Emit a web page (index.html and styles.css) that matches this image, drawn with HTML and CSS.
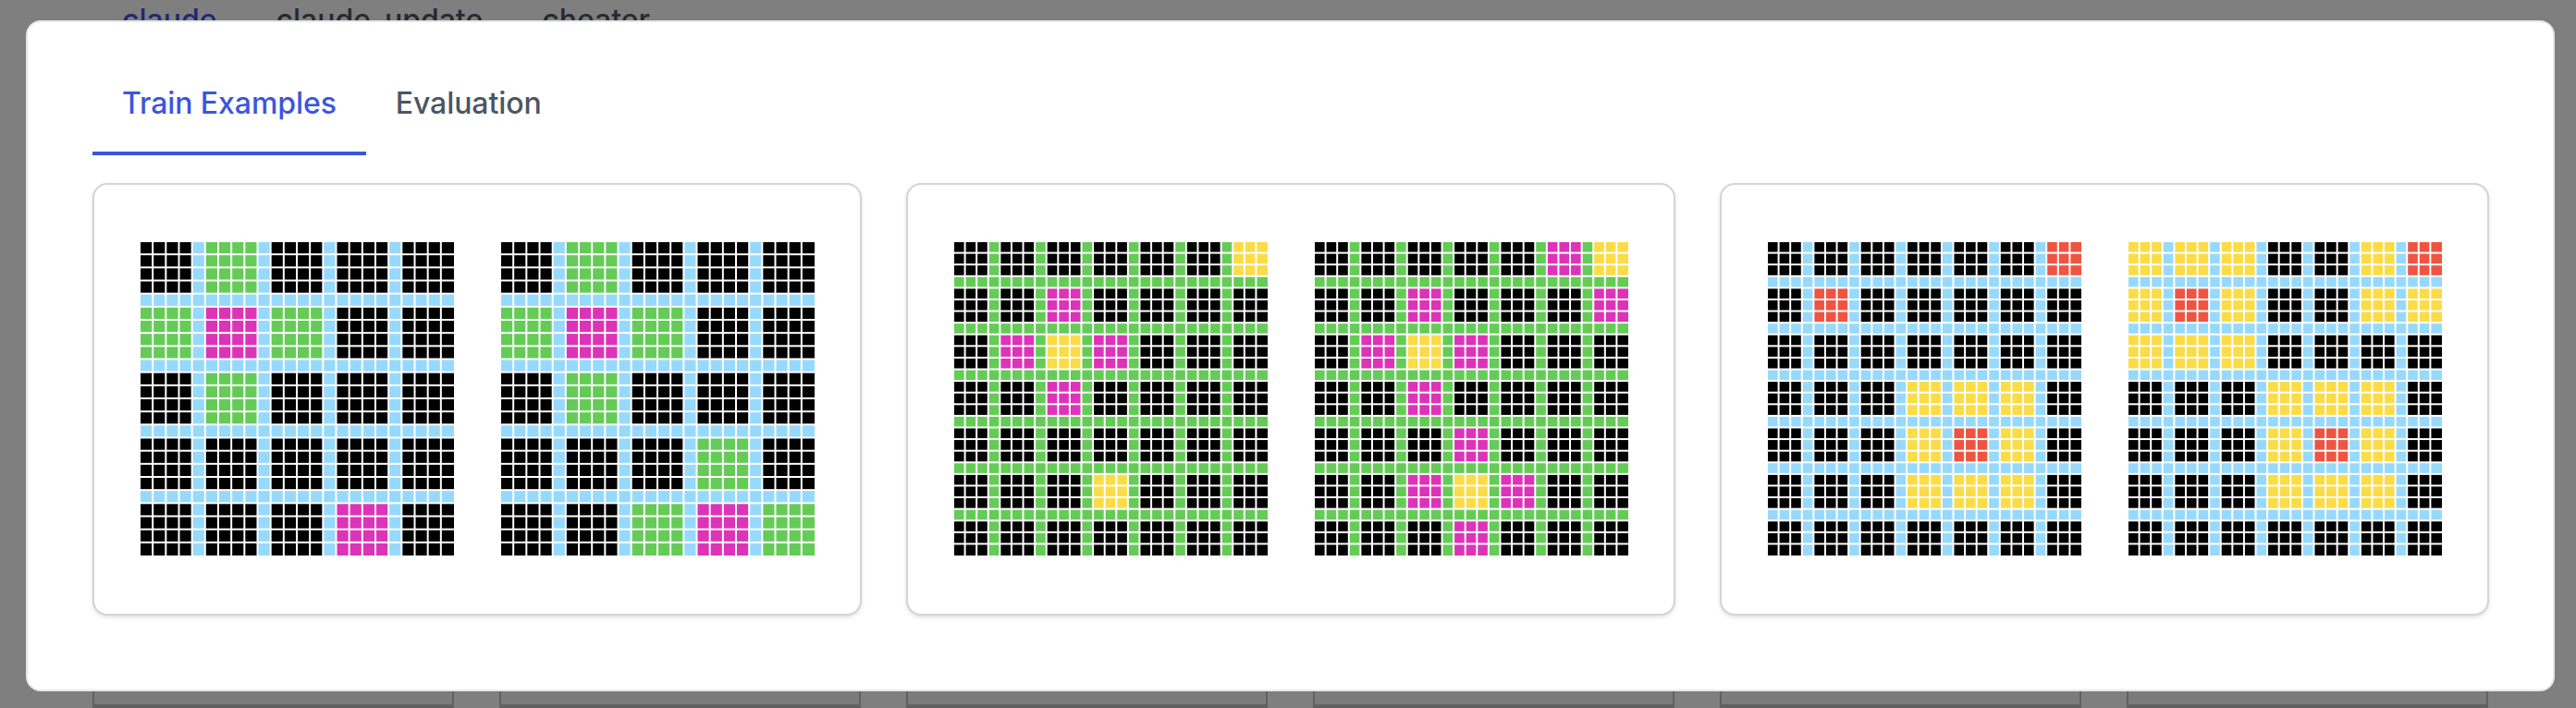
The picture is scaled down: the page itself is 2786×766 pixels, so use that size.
FILE: index.html
```html
<!DOCTYPE html>
<html lang="en">
<head>
<meta charset="utf-8">
<title>Train Examples</title>
<link rel="stylesheet" href="styles.css">
</head>
<body>
<div class="page">
  <nav class="tabs page-tabs">
    <span class="tab tab-active">claude</span>
    <span class="tab">claude_update</span>
    <span class="tab">cheater</span>
  </nav>
  <div class="results">
    <div class="result"></div><div class="result"></div><div class="result"></div>
    <div class="result"></div><div class="result"></div><div class="result"></div>
    <div class="result"></div><div class="result"></div><div class="result"></div>
    <div class="result"></div><div class="result"></div><div class="result"></div>
  </div>
</div>
<div class="overlay">
  <div class="modal">
    <nav class="tabs">
      <span class="tab tab-active tab-underlined">Train Examples</span>
      <span class="tab">Evaluation</span>
    </nav>
    <div class="cards">
      <section class="card">
        <svg class="grid" viewBox="0 0 340 340" data-sep="b" data-size="4" data-blocks="KGKKK GMGKK KGKKK KKKKK KKKMK"></svg>
        <svg class="grid" viewBox="0 0 340 340" data-sep="b" data-size="4" data-blocks="KGKKK GMGKK KGKKK KKKGK KKGMG"></svg>
      </section>
      <section class="card">
        <svg class="grid" viewBox="0 0 340 340" data-sep="G" data-size="3" data-blocks="KKKKKKY KKMKKKK KMYMKKK KKMKKKK KKKKKKK KKKYKKK KKKKKKK"></svg>
        <svg class="grid" viewBox="0 0 340 340" data-sep="G" data-size="3" data-blocks="KKKKKMY KKMKKKM KMYMKKK KKMKKKK KKKMKKK KKMYMKK KKKMKKK"></svg>
      </section>
      <section class="card">
        <svg class="grid" viewBox="0 0 340 340" data-sep="b" data-size="3" data-blocks="KKKKKKR KRKKKKK KKKKKKK KKKYYYK KKKYRYK KKKYYYK KKKKKKK"></svg>
        <svg class="grid" viewBox="0 0 340 340" data-sep="b" data-size="3" data-blocks="YYYKKYR YRYKKYY YYYKKKK KKKYYYK KKKYRYK KKKYYYK KKKKKKK"></svg>
      </section>
    </div>
  </div>
</div>
<script src="grids.js"></script>
</body>
</html>
```
FILE: styles.css
```css
* { box-sizing: border-box; }

html, body {
  margin: 0;
  height: 100%;
  overflow: hidden;
  background: #fff;
  font-family: Inter, "Liberation Sans", sans-serif;
}

.tabs {
  display: flex;
}

.tab {
  padding: 33px 32px 32px;
  font-size: 32px;
  font-weight: 500;
  letter-spacing: -0.08px;
  line-height: 48px;
  color: #4b5563;
  white-space: nowrap;
}

.tab-active {
  color: #3b55e0;
}

.tab-underlined {
  padding-bottom: 28px;
  border-bottom: 4px solid #3b55e0;
}

.page {
  height: 100%;
  padding-left: 100px;
  width: 2691px;
  overflow: hidden;
}

.page-tabs {
  margin-top: -35px;
}

.page-tabs .tab {
  letter-spacing: 0;
}

.results {
  display: grid;
  grid-template-columns: repeat(6, 1fr);
  grid-template-rows: 664px 2px;
  column-gap: 49px;
  margin-top: 22px;
}

.result {
  border: 2px solid #c0c2c0;
  background: #f7f9f7;
}

.overlay {
  position: fixed;
  inset: 0;
  padding: 22px 23px 18px 28px;
  background: rgba(0, 0, 0, 0.5);
}

.modal {
  height: 726px;
  padding: 31px 69px 80px 70px;
  background: #fff;
  border: 2px solid #e5e7eb;
  border-radius: 16px;
}

.cards {
  display: grid;
  grid-template-columns: repeat(3, 832px);
  column-gap: 48px;
  margin-top: 30px;
}

.card {
  display: flex;
  justify-content: center;
  gap: 50px;
  padding: 61px 0 63px;
  background: #fff;
  border: 2px solid #d4d4d4;
  border-radius: 16px;
  box-shadow: 0 2px 4px rgba(0, 0, 0, 0.12);
}

.grid {
  display: block;
  width: 340px;
  height: 340px;
  overflow: visible;
}

.K { fill: #000; }
.b { fill: #97d9fd; }
.G { fill: #65cb57; }
.M { fill: #dd33b8; }
.Y { fill: #fadc47; }
.R { fill: #ef5442; }
```
FILE: grids.js
```js
const SVG_NS = "http://www.w3.org/2000/svg";

document.querySelectorAll(".grid").forEach((svg) => {
  const size = Number(svg.dataset.size);
  const sep = svg.dataset.sep;
  const blocks = svg.dataset.blocks.split(" ");
  const step = size + 1;
  const count = blocks.length * step - 1;
  const pitch = 340 / count;

  for (let row = 0; row < count; row++) {
    for (let col = 0; col < count; col++) {
      const onSep = (row + 1) % step === 0 || (col + 1) % step === 0;
      const kind = onSep ? sep : blocks[Math.floor(row / step)][Math.floor(col / step)];
      const rect = document.createElementNS(SVG_NS, "rect");
      rect.setAttribute("x", col * pitch + 1);
      rect.setAttribute("y", row * pitch + 1);
      rect.setAttribute("width", pitch - (col === count - 1 ? 1 : 2));
      rect.setAttribute("height", pitch - (row === count - 1 ? 1 : 2));
      rect.setAttribute("class", kind);
      svg.appendChild(rect);
    }
  }
});
```
